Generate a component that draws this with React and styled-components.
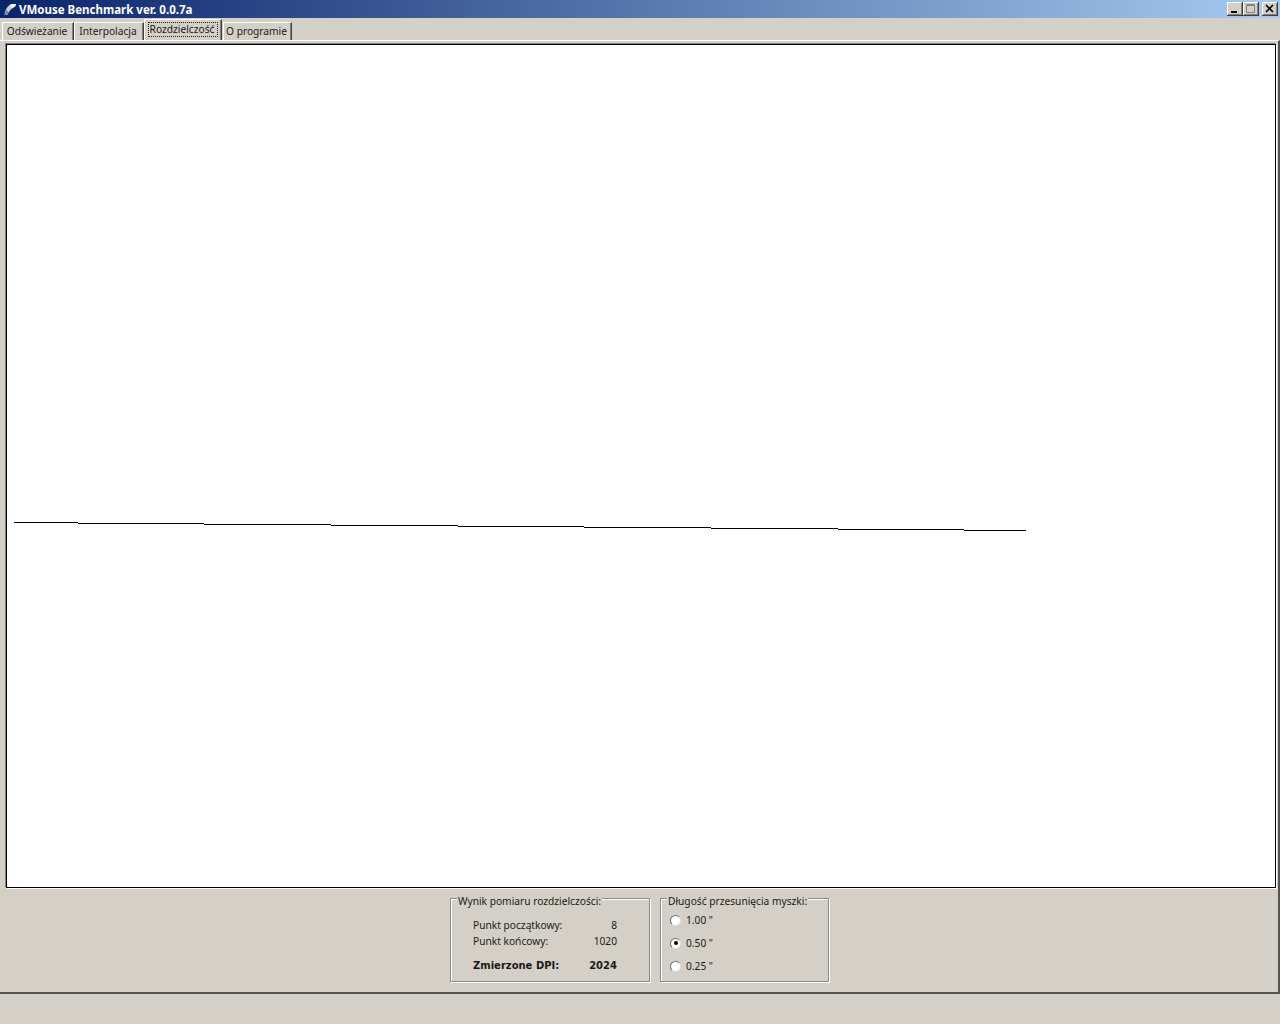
import React from "react";
import styled, { createGlobalStyle } from "styled-components";

const Global = createGlobalStyle`
  html, body { margin: 0; padding: 0; background: #d4d0c8; overflow: hidden; }
  * { box-sizing: border-box; }
`;

const Win = styled.div`
  width: 1280px; height: 1024px; display: flex; flex-direction: column;
  background: #d4d0c8; color: #1a1a1a;
  font-family: "Noto Sans", sans-serif; font-size: 10.2px;
`;
const TitleBar = styled.div`
  height: 18px; flex: none; display: flex; align-items: center; padding: 0 2px 0 4px;
  background: linear-gradient(90deg, #0a246a 0%, #a6caf0 100%);
`;
const Title = styled.div`
  color: #fff; font: bold 11.5px "Noto Sans", sans-serif; margin-left: 3px; flex: 1; white-space: nowrap;
`;
const WinBtn = styled.button`
  width: 16px; height: 14px; padding: 0; margin: 0 0 0 ${p => p.$gap || 0}px; background: #d4d0c8; border: 0;
  box-shadow: inset -1px -1px 0 #404040, inset 1px 1px 0 #fff, inset -2px -2px 0 #808080;
  display: flex; align-items: center; justify-content: center;
`;
const TabStrip = styled.div`
  height: 22px; flex: none; display: flex; align-items: flex-end; padding-left: 2px;
`;
const Tab = styled.div`
  height: ${p => (p.$active ? 21 : 18)}px;
  width: ${p => p.$w}px;
  margin-left: ${p => p.$ml || 0}px;
  padding: ${p => (p.$active ? "2px 3px 3px" : "0 2px 2px 0")};
  display: flex; align-items: center; justify-content: center;
  border-left: 1px solid #fff; border-top: 1px solid #fff; border-right: 1px solid #404040;
  box-shadow: inset -1px 0 0 #808080;
  white-space: nowrap;
`;
const Focus = styled.div`
  width: 100%; height: 100%; border: 1px dotted #222; padding: 0 2px 2px 0;
  display: flex; align-items: center; justify-content: center;
`;
const Panel = styled.div`
  flex: 1; min-height: 0; display: flex; flex-direction: column; padding: 3px 2px 0 5px;
  border-top: 1px solid #fff; border-right: 2px solid #555; border-bottom: 2px solid #555;
`;
const Canvas = styled.div`
  height: 844px; flex: none; background: #fff; border: 1px solid #000;
  box-shadow: -1px -1px 0 #808080, 1px 1px 0 #fff;
  margin-left: 1px;
`;
const Plot = styled.svg`
  display: block; width: 100%; height: 100%;
`;
const Controls = styled.div`
  flex: 1; display: flex; justify-content: flex-start; align-items: flex-start; gap: 10px;
  padding: 10px 0 0 445px;
`;
const Group = styled.div`
  position: relative; height: 84px; width: ${p => p.$w}px;
  border: 1px solid #8a8a8a; box-shadow: 1px 1px 0 #fff, inset 1px 1px 0 #fff;
`;
const Legend = styled.div`
  position: absolute; top: -4px; left: 6px; padding: 0 1px; background: #d4d0c8; line-height: 12px; white-space: nowrap;
`;
const Results = styled.div`
  display: grid; grid-template-columns: 121px 23px; justify-content: start; padding: 18px 0 0 22px;
  line-height: 16px; row-gap: 0;
`;
const Label = styled.div`
  white-space: nowrap;
`;
const Value = styled(Label)`
  text-align: right; justify-self: end;
`;
const ScoreLabel = styled(Label)`
  font: bold 10px/16px "DejaVu Sans", sans-serif; margin-top: 9px;
`;
const ScoreValue = styled(ScoreLabel)`
  text-align: right; justify-self: end;
`;
const Radios = styled.div`
  display: flex; flex-direction: column; gap: 9px; padding: 14px 0 0 9px;
`;
const Radio = styled.div`
  display: flex; align-items: center; gap: 5px; height: 14px; line-height: 14px;
`;
const Dot = styled.span`
  width: 11px; height: 11px; border-radius: 50%; background: #fff; flex: none;
  border: 1px solid #6e6e6e; border-right-color: #ddd; border-bottom-color: #ddd;
  display: flex; align-items: center; justify-content: center;
  &::after {
    content: ""; width: 4px; height: 4px; border-radius: 50%;
    background: ${p => (p.$on ? "#000" : "transparent")};
  }
`;
const StatusBar = styled.div`
  height: 30px; flex: none;
`;

const seg = [14, 78, 204, 331, 458, 584, 711, 838, 964, 1026];
const points = seg.slice(0, -1).map((x, i) => `M${x - 7} ${521.5 - 44 + i}H${seg[i + 1] - 7}`).join("");

export default function App() {
  return (
    <Win>
      <Global />
      <TitleBar>
        <svg width="12" height="13" viewBox="0 0 12 13">
          <path d="M0.5 12 C1 8 3 3 7 1 L12 1 C12 4 9 5 7.5 6 C5.5 7.5 4.5 9.5 3.5 12 Z" fill="#c9d1de" />
          <path d="M7 1 L12 1 L11 3.5 L7.5 5 Z" fill="#fff" />
          <path d="M0.5 12 L2.5 7 L4.5 8.5 L3.5 12 Z" fill="#6f81a6" />
        </svg>
        <Title>VMouse Benchmark ver. 0.0.7a</Title>
        <WinBtn aria-label="min">
          <svg width="10" height="10" viewBox="0 0 10 10"><rect x="1" y="7" width="6" height="2" fill="#000" /></svg>
        </WinBtn>
        <WinBtn aria-label="max">
          <svg width="10" height="10" viewBox="0 0 10 10"><path d="M0.5 1.5H8.5V8.5H0.5Z M0.5 0.5H8.5" fill="none" stroke="#808080" /></svg>
        </WinBtn>
        <WinBtn $gap={3} aria-label="close">
          <svg width="10" height="10" viewBox="0 0 10 10"><path d="M1 1L8 8M8 1L1 8" stroke="#000" strokeWidth="1.6" fill="none" /></svg>
        </WinBtn>
      </TitleBar>
      <TabStrip>
        <Tab $w={72}>Odświeżanie</Tab>
        <Tab $w={70}>Interpolacja</Tab>
        <Tab $w={78} $active><Focus>Rozdzielczość</Focus></Tab>
        <Tab $w={69} $ml={1}>O programie</Tab>
      </TabStrip>
      <Panel>
        <Canvas>
          <Plot>
            <path d={points} stroke="#000" strokeWidth="1" fill="none" />
          </Plot>
        </Canvas>
        <Controls>
          <Group $w={200}>
            <Legend>Wynik pomiaru rozdzielczości:</Legend>
            <Results>
              <Label>Punkt początkowy:</Label><Value>8</Value>
              <Label>Punkt końcowy:</Label><Value>1020</Value>
              <ScoreLabel>Zmierzone DPI:</ScoreLabel><ScoreValue>2024</ScoreValue>
            </Results>
          </Group>
          <Group $w={169}>
            <Legend>Długość przesunięcia myszki:</Legend>
            <Radios>
              <Radio><Dot />1.00 "</Radio>
              <Radio><Dot $on />0.50 "</Radio>
              <Radio><Dot />0.25 "</Radio>
            </Radios>
          </Group>
        </Controls>
      </Panel>
      <StatusBar />
    </Win>
  );
}
